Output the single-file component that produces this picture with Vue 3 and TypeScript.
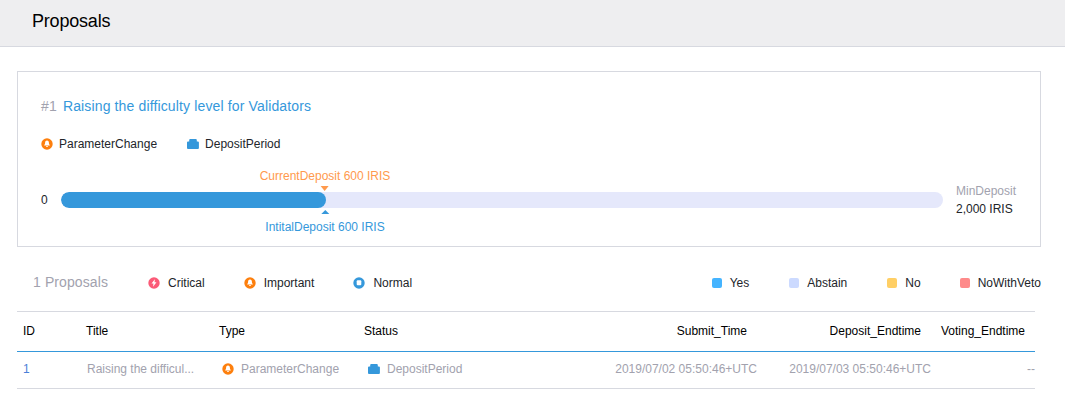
<script setup lang="ts">
interface Legend { label: string; kind: string }
const levels: Legend[] = [
  { label: 'Critical', kind: 'critical' },
  { label: 'Important', kind: 'important' },
  { label: 'Normal', kind: 'normal' },
]
const votes: Legend[] = [
  { label: 'Yes', kind: 'yes' },
  { label: 'Abstain', kind: 'abstain' },
  { label: 'No', kind: 'no' },
  { label: 'NoWithVeto', kind: 'veto' },
]
</script>

<template>
  <div class="page">
    <header class="topbar"><h1>Proposals</h1></header>

    <section class="card">
      <h2 class="card-title"><span class="num">#1</span> Raising the difficulty level for Validators</h2>
      <div class="tags">
        <span class="tag">
          <svg class="ic" viewBox="0 0 12 12"><circle cx="6" cy="6" r="5.7" fill="#fd7f0d"/><path d="M6 2.6c1.3 0 1.9 1 1.9 2.2 0 1.1.5 1.8 1 2.6H3.100c.5-.8 1-1.500 1-2.600C4.100 3.600 4.700 2.600 6 2.600zM5 8h2a1 1 0 0 1-2 0z" fill="#fff"/></svg>
          ParameterChange
        </span>
        <span class="tag tag-second">
          <svg class="ic-box" viewBox="0 0 12 10"><path d="M3.200 0h5.600a1 1 0 0 1 1 1v1.500h1.100a1 1 0 0 1 1 1V9a1 1 0 0 1-1 1H1a1 1 0 0 1-1-1V3.500a1 1 0 0 1 1-1h1.200V1a1 1 0 0 1 1-1z" fill="#3598db"/></svg>
          DepositPeriod
        </span>
      </div>
      <div class="progress-row">
        <span class="zero">0</span>
        <div class="track-wrap">
          <div class="track"><div class="fill"></div></div>
          <div class="marker marker-top">
            <span>CurrentDeposit 600 IRIS</span>
            <i class="tri tri-down"></i>
          </div>
          <div class="marker marker-bottom">
            <i class="tri tri-up"></i>
            <span>IntitalDeposit 600 IRIS</span>
          </div>
        </div>
        <div class="min">
          <div class="min-label">MinDeposit</div>
          <div class="min-value">2,000 IRIS</div>
        </div>
      </div>
    </section>

    <div class="legend-bar">
      <span class="count">1 Proposals</span>
      <div class="levels">
        <span v-for="l in levels" :key="l.kind" class="level">
          <svg class="ic" viewBox="0 0 12 12">
            <template v-if="l.kind === 'critical'">
              <circle cx="6" cy="6" r="5.700" fill="#fb5a77"/>
              <path d="M6.900 2.300 3.500 6.600h2L5 9.700 8.500 5.300h-2z" fill="#fff"/>
            </template>
            <template v-else-if="l.kind === 'important'">
              <circle cx="6" cy="6" r="5.700" fill="#fd7f0d"/>
              <path d="M6 2.600c1.300 0 1.900 1 1.900 2.200 0 1.100.5 1.800 1 2.600H3.100c.5-.8 1-1.500 1-2.600C4.100 3.600 4.700 2.600 6 2.600zM5 8h2a1 1 0 0 1-2 0z" fill="#fff"/>
            </template>
            <template v-else>
              <circle cx="6" cy="6" r="5.700" fill="#3598db"/>
              <rect x="3.700" y="3.300" width="4.600" height="5" rx="1" fill="#fff"/>
            </template>
          </svg>
          {{ l.label }}
        </span>
      </div>
      <div class="votes">
        <span v-for="v in votes" :key="v.kind" class="vote" :class="'vote-' + v.kind">
          <i class="swatch" :class="v.kind"></i>{{ v.label }}
        </span>
      </div>
    </div>

    <div class="table">
      <div class="tr thead">
        <span class="c-id">ID</span>
        <span class="c-title">Title</span>
        <span class="c-type">Type</span>
        <span class="c-status">Status</span>
        <span class="c-time">Submit_Time</span>
        <span class="c-time">Deposit_Endtime</span>
        <span class="c-time">Voting_Endtime</span>
      </div>
      <div class="tr tbody">
        <span class="c-id link">1</span>
        <span class="c-title">Raising the difficul...</span>
        <span class="c-type with-icon">
          <svg class="ic" viewBox="0 0 12 12"><circle cx="6" cy="6" r="5.700" fill="#fd7f0d"/><path d="M6 2.600c1.300 0 1.900 1 1.900 2.200 0 1.100.5 1.800 1 2.600H3.100c.5-.8 1-1.500 1-2.600C4.100 3.600 4.700 2.600 6 2.600zM5 8h2a1 1 0 0 1-2 0z" fill="#fff"/></svg>
          ParameterChange
        </span>
        <span class="c-status with-icon">
          <svg class="ic-box" viewBox="0 0 12 10"><path d="M3.200 0h5.600a1 1 0 0 1 1 1v1.500h1.100a1 1 0 0 1 1 1V9a1 1 0 0 1-1 1H1a1 1 0 0 1-1-1V3.500a1 1 0 0 1 1-1h1.200V1a1 1 0 0 1 1-1z" fill="#3598db"/></svg>
          DepositPeriod
        </span>
        <span class="c-time">2019/07/02 05:50:46+UTC</span>
        <span class="c-time">2019/07/03 05:50:46+UTC</span>
        <span class="c-time">--</span>
      </div>
    </div>
  </div>
</template>

<style scoped>
.page {
  width: 1065px;
  height: 400px;
  overflow: hidden;
  background: #fff;
  font-family: "Liberation Sans", Arial, sans-serif;
  font-size: 12px;
  color: #22252a;
}
.topbar {
  height: 46px;
  box-sizing: content-box;
  background: #eeeef0;
  border-bottom: 1px solid #d7d9e0;
  padding-left: 32px;
  display: flex;
  align-items: center;
}
.topbar h1 {
  margin: 0 0 5px;
  font-size: 18px;
  line-height: 20px;
  font-weight: 400;
  letter-spacing: -0.2px;
  color: #000;
}
.card {
  box-sizing: border-box;
  width: 1024px;
  height: 176px;
  margin: 24px 0 0 17px;
  border: 1px solid #d7d9e0;
  padding: 24px 23px 0;
}
.card-title {
  margin: 0;
  font-size: 14px;
  line-height: 20px;
  font-weight: 400;
  letter-spacing: 0.14px;
  color: #3598db;
}
.num { color: #a2a2ae; margin-right: 2px; }
.tags {
  margin-top: 18px;
  display: flex;
  height: 20px;
  align-items: center;
}
.tag { display: inline-flex; align-items: center; gap: 6px; }
.tag-second { margin-left: 30px; gap: 6px; }
.ic { width: 12px; height: 12px; flex: none; }
.ic-box { width: 12px; height: 10px; flex: none; }
.progress-row {
  display: flex;
  align-items: center;
  margin-top: 26px;
  height: 40px;
}
.zero { width: 20px; flex: none; }
.track-wrap { position: relative; width: 882px; flex: none; }
.track {
  height: 16px;
  border-radius: 8px;
  background: #e5e8fb;
  overflow: hidden;
}
.fill {
  width: 265px;
  height: 16px;
  border-radius: 8px;
  background: #3598db;
}
.marker {
  position: absolute;
  left: 264px;
  transform: translateX(-50%);
  display: flex;
  flex-direction: column;
  align-items: center;
  white-space: nowrap;
  line-height: 14px;
}
.marker-top { bottom: 17px; color: #ff9a4d; gap: 3px; }
.marker-bottom { top: 18px; color: #3598db; gap: 6px; }
.tri { width: 0; height: 0; border-left: 4px solid transparent; border-right: 4px solid transparent; }
.tri-down { border-top: 5px solid #ff9a4d; }
.tri-up { border-bottom: 4px solid #3598db; }
.min { margin-left: 13px; line-height: 18px; }
.min-label { color: #a2a2ae; }
.legend-bar {
  display: flex;
  align-items: center;
  height: 20px;
  margin-top: 26px;
  padding-left: 33px;
  width: 1008px;
}
.count { width: 115px; flex: none; font-size: 14px; letter-spacing: 0.1px; color: #a2a2ae; margin-bottom: 2px; }
.levels { display: flex; }
.level { display: inline-flex; align-items: center; gap: 8px; margin-right: 39px; }
.votes { display: flex; margin-left: auto; }
.vote { display: inline-flex; align-items: center; margin-left: 40px; }
.vote-veto { margin-left: 39px; }
.swatch { width: 10px; height: 10px; border-radius: 2px; margin-right: 8px; }
.yes { background: #45b4ff; }
.abstain { background: #ccdaff; }
.no { background: #ffcf65; }
.veto { background: #fe8a8a; }
.table { width: 1018px; margin: 18px 0 0 17px; }
.tr {
  display: grid;
  grid-template-columns: 63px 133px 145px 225px 174px 174px 104px;
  align-items: center;
}
.tr > span { white-space: nowrap; }
.thead {
  box-sizing: content-box;
  height: 37px;
  padding-bottom: 2px;
  border-top: 1px solid #d7d9e0;
  border-bottom: 1px solid #3598db;
  color: #000;
}
.thead .c-id,
.thead .c-title,
.thead .c-type,
.thead .c-status { padding-left: 6px; }
.thead .c-time { text-align: right; padding-right: 10px; }
.tbody {
  box-sizing: content-box;
  height: 34px;
  padding-bottom: 2px;
  border-bottom: 1px solid #d7d9e0;
  color: #a2a2ae;
}
.tbody .c-id { padding-left: 6px; }
.tbody .c-title { padding-left: 7px; }
.tbody .c-time { text-align: right; }
.link { color: #4a80d8; }
.with-icon { display: flex; align-items: center; }
.c-type.with-icon { padding-left: 9px; gap: 7px; }
.c-status.with-icon { padding-left: 10px; gap: 7px; }
</style>
